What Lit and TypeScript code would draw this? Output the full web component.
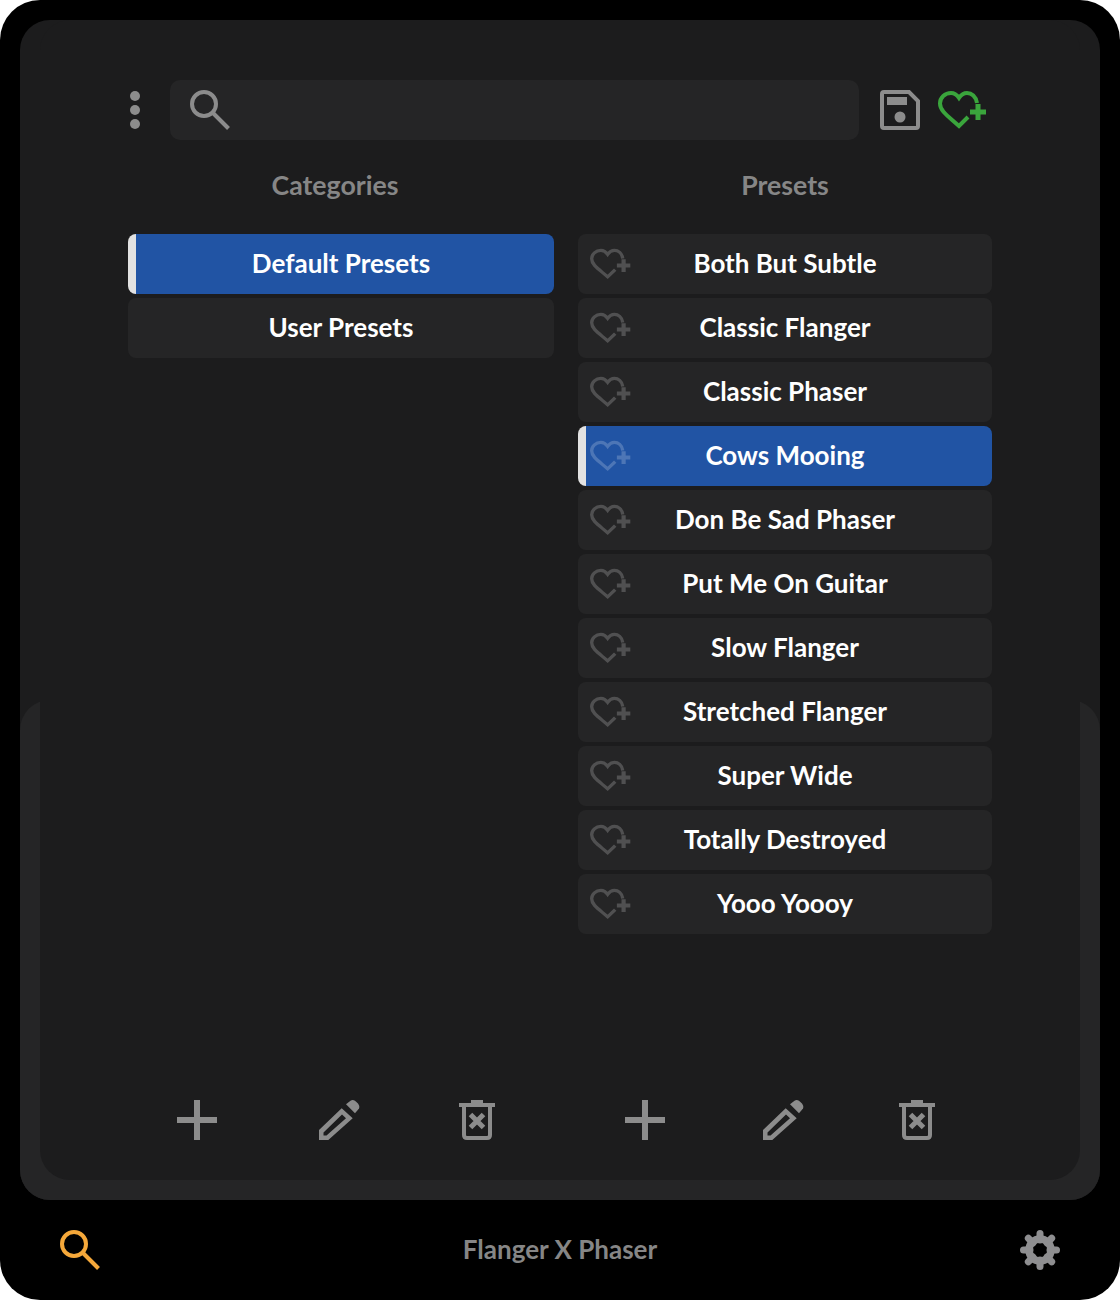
import { LitElement, html, css, svg } from "lit";
import { customElement } from "lit/decorators.js";

const categories = ["Default Presets", "User Presets"];
const presets = [
  "Both But Subtle",
  "Classic Flanger",
  "Classic Phaser",
  "Cows Mooing",
  "Don Be Sad Phaser",
  "Put Me On Guitar",
  "Slow Flanger",
  "Stretched Flanger",
  "Super Wide",
  "Totally Destroyed",
  "Yooo Yoooy",
];

const heartPlus = (cls: string) => html`
  <svg class=${cls} viewBox="0 0 50 40" preserveAspectRatio="none" fill="none" stroke="currentColor" stroke-width="4">
    <path d="M39 13C38 6.500 33.500 3 29 3C25.500 3 23 5 21 8C19 5 16.500 3 13 3C7 3 2 7.500 2 13.500C2 21 10 26 21 36L30 27" />
    <path d="M40 14V30M32 22H48" stroke-width="5" />
  </svg>
`;

const searchIcon = (cls: string) => html`
  <svg class=${cls} viewBox="0 0 40 40" fill="none" stroke="currentColor" stroke-width="4">
    <circle cx="14" cy="14" r="12" />
    <path d="M22.500 22.500L38.500 38.500" />
  </svg>
`;

const gearTeeth = [0, 45, 90, 135, 180, 225, 270, 315];

const gearIcon = html`
  <svg class="ic-footer gear" viewBox="0 0 40 40">
    ${gearTeeth.map(
      (a) => svg`<line x1="20" y1="10" x2="20" y2="3.500" transform="rotate(${a} 20 20)"
        stroke="currentColor" stroke-width="7" stroke-linecap="round" />`
    )}
    <circle cx="20" cy="20" r="11" fill="none" stroke="currentColor" stroke-width="7.500" />
  </svg>
`;

const plusIcon = html`
  <svg class="ic-tool plus" viewBox="0 0 40 40" fill="none" stroke="currentColor" stroke-width="6">
    <path d="M20 0V40M0 20H40" />
  </svg>
`;

const pencilIcon = html`
  <svg class="ic-tool pencil" viewBox="0 0 41 40" fill="currentColor">
    <path fill-rule="evenodd" d="M0 30L22.700 8.300L33.700 18.300L9.300 40H0ZM4.500 32.500V35.500H7.500L27 18.300L23 14.500Z" />
    <path d="M27 4.300L31.500 .7Q33.500 -.5 36 .7L39 3.500Q41 6 40 8.500L36 13.300Z" />
  </svg>
`;

const trashIcon = html`
  <svg class="ic-tool trash" viewBox="0 0 36 40" fill="none" stroke="currentColor" stroke-width="4">
    <path d="M0 5H36" />
    <path d="M12 2H24" />
    <path d="M5 5V35Q5 38 8 38H28Q31 38 31 35V5" />
    <path d="M11.500 14.500L24.500 27.500M24.500 14.500L11.500 27.500" stroke-width="5" />
  </svg>
`;

@customElement("app-root")
export class AppRoot extends LitElement {
  static styles = css`
    :host {
      display: block;
      width: 1120px;
      height: 1300px;
      background: #fff;
      font-family: "Lato", "Liberation Sans", sans-serif;
    }

    .shell {
      height: 1300px;
      box-sizing: border-box;
      background: #000;
      border-radius: 40px;
      padding: 20px 20px 0;
      display: flex;
      flex-direction: column;
    }

    .panel {
      position: relative;
      height: 1180px;
      box-sizing: border-box;
      padding: 0 20px 20px;
      background: #1c1c1d;
      border-radius: 30px;
      display: flex;
    }

    /* lighter band that peeks out round the lower half */
    .panel::before {
      content: "";
      position: absolute;
      left: 0;
      right: 0;
      top: 680px;
      bottom: 0;
      background: #252526;
      border-radius: 30px;
    }

    .inner {
      position: relative;
      flex: 1;
      box-sizing: border-box;
      padding: 60px 88px 40px;
      background: #1c1c1d;
      border-radius: 30px;
      display: flex;
      flex-direction: column;
    }

    .toolbar {
      display: flex;
      align-items: center;
      height: 60px;
    }

    .dots {
      width: 42px;
      display: flex;
      flex-direction: column;
      align-items: center;
      padding-right: 28px;
      box-sizing: border-box;
      gap: 4px;
    }

    .dots span {
      width: 10px;
      height: 10px;
      border-radius: 50%;
      background: #8c8c8c;
    }

    .search {
      width: 689px;
      height: 60px;
      box-sizing: border-box;
      padding: 10px 0 0 20px;
      background: #252526;
      border-radius: 10px;
    }

    .ic-search {
      display: block;
      width: 40px;
      height: 40px;
      color: #8c8c8c;
    }

    .ic-save {
      width: 40px;
      height: 40px;
      margin-left: 21px;
      color: #8c8c8c;
    }

    .ic-fav {
      width: 50px;
      height: 40px;
      margin-left: 18px;
      color: #3aa53c;
    }

    .columns {
      display: grid;
      grid-template-columns: 426px 414px;
      column-gap: 24px;
      margin-top: 30px;
    }

    .heading {
      height: 32px;
      line-height: 30px;
      margin: 0 0 32px;
      font-size: 26.700px;
      font-weight: 700;
      text-align: center;
      color: #868686;
    }

    .heading.cat {
      padding-right: 12px;
    }

    .list {
      display: flex;
      flex-direction: column;
      gap: 4px;
    }

    .row {
      position: relative;
      height: 60px;
      padding-bottom: 2px;
      display: flex;
      align-items: center;
      justify-content: center;
      box-sizing: border-box;
      background: #252526;
      border-radius: 8px;
      color: #fff;
      font-size: 26px;
      font-weight: 700;
    }

    .row.selected {
      background: #2154a4;
      border-left: 8px solid #e2e2e2;
    }

    .row.selected span {
      margin-left: -8px;
    }

    .ic-row {
      position: absolute;
      left: 12px;
      top: 14px;
      width: 42px;
      height: 32px;
      color: rgba(255, 255, 255, 0.2);
    }

    .row.selected .ic-row {
      left: 4px;
    }

    .tools {
      display: grid;
      grid-template-columns: 426px 414px;
      column-gap: 24px;
      margin-top: auto;
    }

    .tool-group {
      display: grid;
      height: 40px;
    }

    .tool-group.left {
      grid-template-columns: repeat(3, 141px);
      padding-left: 49px;
    }

    .tool-group.right {
      grid-template-columns: repeat(3, 137px);
      padding-left: 47px;
    }

    .ic-tool {
      display: block;
      height: 40px;
      width: 41px;
      color: #8c8c8c;
    }

    .ic-tool.plus {
      width: 40px;
    }

    .ic-tool.pencil {
      margin-left: 1px;
    }

    .ic-tool.trash {
      width: 36px;
    }

    .footer {
      flex: 1;
      display: flex;
      align-items: center;
      justify-content: space-between;
      padding: 0 40px;
      color: #868686;
      font-size: 26px;
      font-weight: 700;
    }

    .footer span {
      margin-bottom: 2px;
    }

    .ic-footer {
      width: 40px;
      height: 40px;
    }

    .ic-footer.orange {
      color: #f5a83a;
    }

    .ic-footer.gear {
      color: #8e8e90;
    }
  `;

  private renderTools(side: string) {
    return html`
      <div class="tool-group ${side}">${plusIcon}${pencilIcon}${trashIcon}</div>
    `;
  }

  render() {
    return html`
      <div class="shell">
        <div class="panel">
          <div class="inner">
            <div class="toolbar">
              <div class="dots"><span></span><span></span><span></span></div>
              <div class="search">${searchIcon("ic-search")}</div>
              <svg class="ic-save" viewBox="0 0 40 40">
                <path
                  d="M4 2H29L38 11V36Q38 38 36 38H4Q2 38 2 36V4Q2 2 4 2Z"
                  fill="none"
                  stroke="currentColor"
                  stroke-width="4"
                />
                <rect x="7" y="7" width="20" height="8" fill="currentColor" />
                <circle cx="20" cy="27" r="5.500" fill="currentColor" />
              </svg>
              ${heartPlus("ic-fav")}
            </div>

            <div class="columns">
              <div>
                <h2 class="heading cat">Categories</h2>
                <div class="list">
                  ${categories.map(
                    (c, i) => html`
                      <div class="row ${i === 0 ? "selected" : ""}"><span>${c}</span></div>
                    `
                  )}
                </div>
              </div>
              <div>
                <h2 class="heading">Presets</h2>
                <div class="list">
                  ${presets.map(
                    (p) => html`
                      <div class="row ${p === "Cows Mooing" ? "selected" : ""}">
                        ${heartPlus("ic-row")}<span>${p}</span>
                      </div>
                    `
                  )}
                </div>
              </div>
            </div>

            <div class="tools">${this.renderTools("left")}${this.renderTools("right")}</div>
          </div>
        </div>

        <div class="footer">
          ${searchIcon("ic-footer orange")}
          <span>Flanger X Phaser</span>
          ${gearIcon}
        </div>
      </div>
    `;
  }
}
